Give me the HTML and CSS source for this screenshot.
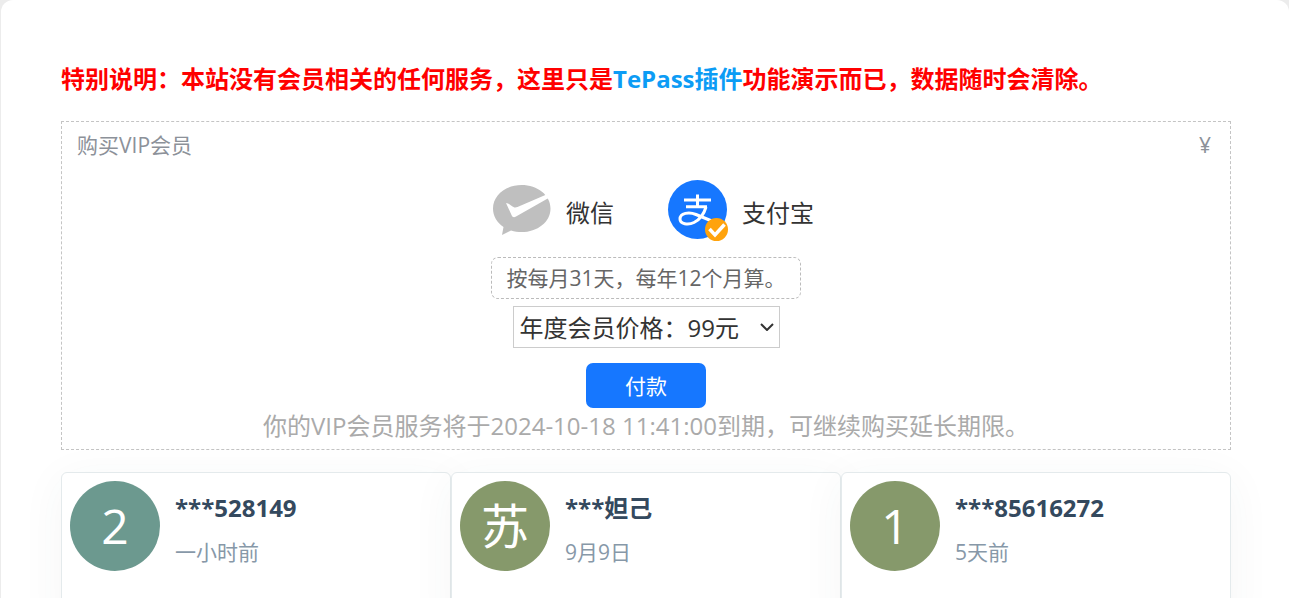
FILE: index.html
```html
<!DOCTYPE html>
<html lang="zh-CN">
<head>
    <meta charset="UTF-8">
    <meta name="viewport" content="width=device-width, initial-scale=1.0">
    <title>购买VIP会员</title>
    <link rel="stylesheet" href="styles.css">
</head>
<body>
    <main class="page">
        <p class="notice">特别说明：本站没有会员相关的任何服务，这里只是<a href="#">TePass插件</a>功能演示而已，数据随时会清除。</p>

        <form class="vip-box">
            <div class="vip-header">
                <span>购买VIP会员</span>
                <span>¥</span>
            </div>

            <div class="pay-types">
                <label class="pay-type" for="wxpay">
                    <input type="radio" name="paytype" id="wxpay" value="wxpay">
                    <svg class="pay-icon" viewBox="0 0 60 60" aria-hidden="true">
                        <path fill="#bfbfbf" d="M29.500 5C13.500 5 1 15.500 1 28.500c0 7.500 4 14 10.500 18.500L10 55l9-4.500c3.500 1 7 1.600 10.500 1.600C45.500 52.100 58.500 42 58.500 28.500S45.500 5 29.500 5z"/>
                        <path fill="#fff" d="M14 23c2.500 0 5 2.500 7.500 4 1.500.8 2.500.5 4 0L54.500 14.500l3 3L24 36.500c-2 1.200-3.500.8-4.500-1.500z"/>
                    </svg>
                    <span>微信</span>
                </label>
                <label class="pay-type" for="alipay">
                    <input type="radio" name="paytype" id="alipay" value="alipay" checked>
                    <svg class="pay-icon" viewBox="0 0 60 60" aria-hidden="true">
                        <circle cx="29.500" cy="29.500" r="29.500" fill="#1677ff"/>
                        <g fill="none" stroke="#fff" stroke-width="3">
                            <path d="M16 20h27M29.500 14.500v12M18 26.800h21"/>
                            <path d="M38 27c-2 7-6 12.500-12 15.500-6 3-14 1.500-14-3.500 0-6 9-7.500 16-4.500l17 7"/>
                        </g>
                        <circle cx="48.500" cy="49.500" r="11.500" fill="#ffa30d"/>
                        <path fill="none" stroke="#fff" stroke-width="3.500" d="M41.500 49l5.500 6 9.500-10.500"/>
                    </svg>
                    <span>支付宝</span>
                </label>
            </div>

            <div class="hint">按每月31天，每年12个月算。</div>
            <div class="price-wrap">
                <select class="price" name="price" aria-label="会员价格">
                    <option>年度会员价格：99元</option>
                </select>
                <svg class="price-arrow" viewBox="0 0 14 8" aria-hidden="true">
                    <path fill="none" stroke="#333" stroke-width="2" d="M1 1l6 6 6-6"/>
                </svg>
            </div>
            <button class="pay-btn" type="button">付款</button>
            <p class="expire">你的VIP会员服务将于2024-10-18 11:41:00到期，可继续购买延长期限。</p>
        </form>

        <div class="members">
            <div class="member">
                <div class="avatar teal">2</div>
                <div class="member-info">
                    <strong>***528149</strong>
                    <span>一小时前</span>
                </div>
            </div>
            <div class="member">
                <div class="avatar">苏</div>
                <div class="member-info">
                    <strong>***妲己</strong>
                    <span>9月9日</span>
                </div>
            </div>
            <div class="member">
                <div class="avatar">1</div>
                <div class="member-info">
                    <strong>***85616272</strong>
                    <span>5天前</span>
                </div>
            </div>
        </div>
    </main>
</body>
</html>
```
FILE: styles.css
```css
* {
    margin: 0;
    padding: 0;
    box-sizing: border-box;
}

html {
    scrollbar-width: none;
}

body {
    background: #ececec;
    font-family: "Open Sans", "Noto Sans CJK SC", sans-serif;
    font-size: 24px;
    line-height: 36px;
    color: #333;
}

.page {
    min-height: 100vh;
    margin-left: 1px;
    padding: 61px 58px 0 60px;
    background: #fff;
    border-radius: 12px 12px 0 0;
}

.notice {
    margin-bottom: 24px;
    font-weight: 700;
    color: #f00;
}

.notice a {
    color: #0c9cf5;
    text-decoration: none;
}

.vip-box {
    display: flex;
    flex-direction: column;
    align-items: center;
    padding: 7px 15px 6px;
    border: 1px dashed #c4c4c4;
}

.vip-header {
    display: flex;
    justify-content: space-between;
    align-self: stretch;
    padding-right: 4px;
    font-size: 21px;
    line-height: 32px;
    color: #8c9199;
}

.pay-types {
    display: flex;
    gap: 54px;
    margin: 19px 0 17px;
    padding-left: 14px;
}

.pay-type {
    display: flex;
    align-items: center;
    gap: 14px;
    cursor: pointer;
}

.pay-type span {
    padding-top: 6px;
}

.pay-type input {
    position: absolute;
    opacity: 0;
}

.pay-icon {
    width: 60px;
    height: 60px;
    overflow: visible;
}

.hint {
    padding: 4px 14px;
    border: 1px dashed #bbb;
    border-radius: 7px;
    font-size: 21px;
    line-height: 32px;
    color: #666;
}

.price-wrap {
    position: relative;
    margin: 7px 0 15px;
}

.price {
    display: block;
    height: 42px;
    padding: 0 39px 0 6px;
    appearance: none;
    border: 1px solid #ccc;
    border-radius: 0;
    background-color: #fff;
    font-family: inherit;
    font-size: 24px;
    color: #333;
}

.price-arrow {
    position: absolute;
    top: 17px;
    right: 6px;
    width: 14px;
    height: 8px;
    pointer-events: none;
}

.pay-btn {
    width: 120px;
    height: 45px;
    padding-bottom: 2px;
    border: none;
    border-radius: 7px;
    background: #1677ff;
    font-family: inherit;
    font-size: 21px;
    color: #fff;
    cursor: pointer;
}

.expire {
    line-height: 35px;
    color: #aaa;
}

.members {
    display: grid;
    grid-template-columns: repeat(3, 1fr);
    margin-top: 22px;
}

.member {
    display: flex;
    gap: 15px;
    height: 160px;
    padding: 8px;
    border: 1px solid #e4eaec;
    border-radius: 6px;
    background: #fff;
    box-shadow: 0 8px 45px rgba(50, 80, 80, 0.05);
}

.avatar {
    flex: none;
    width: 90px;
    height: 90px;
    border-radius: 50%;
    background: #86996b;
    font-size: 48px;
    line-height: 90px;
    text-align: center;
    color: #fff;
}

.avatar.teal {
    background: #6c998f;
}

.member-info {
    display: flex;
    flex-direction: column;
    gap: 10px;
    padding-top: 9px;
}

.member-info strong {
    color: #34495e;
}

.member-info span {
    font-size: 21px;
    line-height: 32px;
    color: #8798a8;
}
```
